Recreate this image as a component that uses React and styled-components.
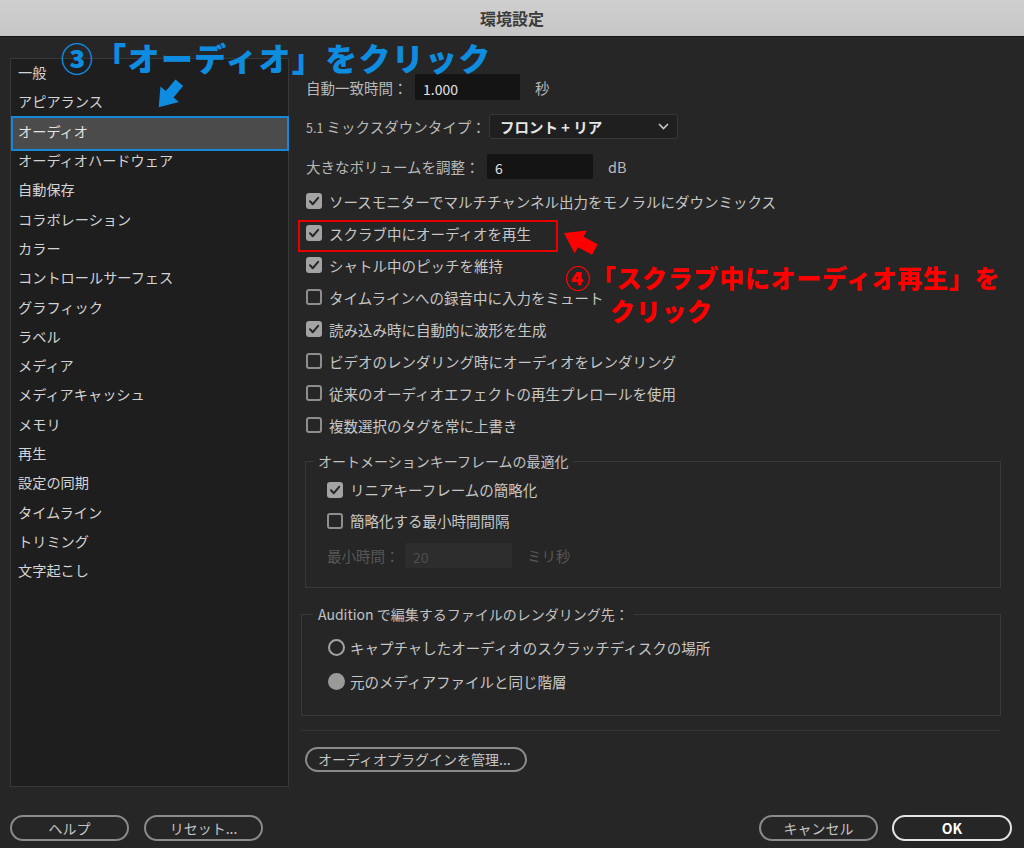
import React from "react";
import styled, { createGlobalStyle, css } from "styled-components";

const Global = createGlobalStyle`
  html, body { margin: 0; padding: 0; background: #262626; }
  body { font-family: "Noto Sans CJK JP", "Noto Sans", sans-serif; }
  * { box-sizing: border-box; }
`;

const Window = styled.div`
  position: relative;
  width: 1024px;
  height: 848px;
  display: flex;
  flex-direction: column;
  background: #262626;
  overflow: hidden;
  font-family: "Noto Sans CJK JP", "Noto Sans", sans-serif;
`;

const TitleBar = styled.div`
  flex: none;
  height: 37px;
  display: flex;
  align-items: center;
  justify-content: center;
  background: linear-gradient(#cfcfcf, #c6c6c6);
  border-bottom: 1px solid #141414;
  font-size: 16px;
  font-weight: 700;
  color: #3b3b3b;
`;

const Body = styled.div`
  flex: 1;
  display: flex;
  flex-direction: column;
  padding: 21px 12px 7px 10px;
`;

const Main = styled.div`
  display: flex;
  gap: 16px;
  height: 729px;
`;

const Sidebar = styled.ul`
  flex: none;
  width: 279px;
  margin: 0;
  padding: 1px 0 0;
  list-style: none;
  background: #1e1e1e;
  border: 1px solid #383838;
`;

const NavItem = styled.li`
  height: 29.3px;
  display: flex;
  align-items: center;
  padding: 0 0 5px 7px;
  font-size: 14.2px;
  color: #d4d4d4;
  white-space: nowrap;
  ${(p) =>
    p.$active &&
    css`
      height: 35.3px;
      margin: -3px -1px -3px 0;
      padding: 0 0 4px 5px;
      background: #4b4b4b;
      border: 2px solid #1787d9;
      color: #e4e4e4;
    `}
`;

const Content = styled.div`
  flex: 1;
  min-width: 0;
  display: flex;
  flex-direction: column;
  align-items: stretch;
  padding: 16px 11px 0 0;
`;

const FieldRow = styled.div`
  display: flex;
  align-items: center;
  height: ${(p) => p.$h || 25}px;
  margin-top: ${(p) => p.$mt || 0}px;
  font-size: 14.5px;
  color: ${(p) => (p.$disabled ? "#575757" : "#b9b9b9")};
  white-space: nowrap;
`;

const Label = styled.span`
  flex: none;
  width: ${(p) => p.$w}px;
  padding-left: 1px;
`;

const Small = styled.span`
  font-size: 12.5px;
`;

const TextInput = styled.div`
  flex: none;
  width: ${(p) => p.$w}px;
  height: 100%;
  display: flex;
  align-items: center;
  padding: 3px 0 0 8px;
  background: ${(p) => (p.$disabled ? "#2d2d2d" : "#141414")};
  border-radius: 2px;
  font-size: 14px;
  color: ${(p) => (p.$disabled ? "#4e4e4e" : "#e2e2e2")};
`;

const Unit = styled.span`
  margin-left: 15px;
`;

const Select = styled.div`
  flex: none;
  width: 189px;
  height: 100%;
  display: flex;
  align-items: center;
  justify-content: space-between;
  padding: 0 8px 0 10px;
  background: #1f1f1f;
  border: 1px solid #383838;
  border-radius: 3px;
  font-size: 14.5px;
  font-weight: 700;
  color: #e6e6e6;
`;

const CheckList = styled.div`
  display: flex;
  flex-direction: column;
  margin-top: 6px;
`;

const CheckRow = styled.div`
  display: flex;
  align-items: center;
  gap: 7px;
  height: ${(p) => p.$h || 32}px;
  padding-left: 1px;
  font-size: 14.5px;
  color: #c6c6c6;
  white-space: nowrap;
`;

const Box = styled.span`
  flex: none;
  width: 16px;
  height: 16px;
  border-radius: 3px;
  display: flex;
  align-items: center;
  justify-content: center;
  ${(p) =>
    p.$checked
      ? css`
          background: #a3a3a3;
        `
      : css`
          border: 2px solid #8e8e8e;
        `}
`;

const Radio = styled.span`
  flex: none;
  width: 17px;
  height: 17px;
  border-radius: 50%;
  ${(p) =>
    p.$filled
      ? css`
          background: #9a9a9a;
        `
      : css`
          border: 2.5px solid #a2a2a2;
        `}
`;

const RadioRow = styled.div`
  display: flex;
  align-items: center;
  gap: 5px;
  height: 34px;
  padding-left: 26px;
  font-size: 14.5px;
  color: #c6c6c6;
  white-space: nowrap;
`;

const Group = styled.fieldset`
  margin: ${(p) => p.$mt}px 0 0 ${(p) => p.$ml || 0}px;
  padding: 0;
  min-width: 0;
  border: 1px solid #383838;
`;

const Legend = styled.legend`
  margin-left: ${(p) => p.$ml || 7}px;
  padding: 0 5px;
  font-size: 14px;
  line-height: 20px;
  color: #c2c2c2;
  white-space: nowrap;
`;

const GroupBody = styled.div`
  display: flex;
  flex-direction: column;
  padding: ${(p) => p.$pad};
`;

const Divider = styled.div`
  height: 1px;
  margin: 14px 0 0 ${(p) => p.$ml || 0}px;
  background: #343434;
`;

const Pill = styled.button`
  flex: none;
  width: ${(p) => p.$w}px;
  height: ${(p) => p.$h || 26}px;
  padding: ${(p) => (p.$left ? "0 0 0 11px" : "0")};
  text-align: ${(p) => (p.$left ? "left" : "center")};
  background: transparent;
  border: 2px solid ${(p) => (p.$primary ? "#e4e4e4" : "#8a8a8a")};
  border-radius: 13px;
  font-family: inherit;
  font-size: 14px;
  font-weight: ${(p) => (p.$primary ? 700 : 400)};
  color: ${(p) => (p.$primary ? "#ffffff" : "#c4c4c4")};
  white-space: nowrap;
`;

const ManageRow = styled.div`
  margin-top: 15px;
`;

const Footer = styled.div`
  display: flex;
  justify-content: space-between;
  margin-top: 28px;
`;

const BtnGroup = styled.div`
  display: flex;
  gap: ${(p) => p.$gap}px;
`;

/* annotations (overlays) */
const Callout = styled.div`
  position: absolute;
  left: ${(p) => p.$x}px;
  top: ${(p) => p.$y}px;
  font-family: "Noto Sans CJK JP", sans-serif;
  font-weight: 900;
  font-size: ${(p) => p.$size}px;
  line-height: ${(p) => p.$lh}px;
  letter-spacing: ${(p) => p.$ls || 0}px;
  color: ${(p) => p.$color};
  white-space: nowrap;
`;

const CalloutLine = styled.div`
  padding-left: ${(p) => p.$indent || 0}px;
`;

const Highlight = styled.div`
  position: absolute;
  left: 298px;
  top: 220px;
  width: 260px;
  height: 32px;
  border: 2px solid #e80000;
`;

const ArrowSvg = styled.svg`
  position: absolute;
  left: ${(p) => p.$x}px;
  top: ${(p) => p.$y}px;
`;

const Arrow = ({ x, y, size, angle, color, points }) => (
  <ArrowSvg $x={x} $y={y} width={size} height={size} viewBox="-22 -22 44 44">
    <polygon points={points} fill={color} transform={`rotate(${angle})`} />
  </ArrowSvg>
);

const Check = () => (
  <svg width="12" height="12" viewBox="0 0 12 12">
    <path d="M2 6.3 L4.8 9.2 L10.2 2.8" fill="none" stroke="#262626" strokeWidth="2" strokeLinecap="round" strokeLinejoin="round" />
  </svg>
);

const CheckBox = ({ checked }) => <Box $checked={checked}>{checked && <Check />}</Box>;

const Chevron = () => (
  <svg width="11" height="7" viewBox="0 0 11 7">
    <path d="M1 1 L5.5 5.5 L10 1" fill="none" stroke="#c8c8c8" strokeWidth="1.6" />
  </svg>
);

const navItems = [
  "一般",
  "アピアランス",
  "オーディオ",
  "オーディオハードウェア",
  "自動保存",
  "コラボレーション",
  "カラー",
  "コントロールサーフェス",
  "グラフィック",
  "ラベル",
  "メディア",
  "メディアキャッシュ",
  "メモリ",
  "再生",
  "設定の同期",
  "タイムライン",
  "トリミング",
  "文字起こし",
];

const checks = [
  ["ソースモニターでマルチチャンネル出力をモノラルにダウンミックス", true],
  ["スクラブ中にオーディオを再生", true],
  ["シャトル中のピッチを維持", true],
  ["タイムラインへの録音中に入力をミュート", false],
  ["読み込み時に自動的に波形を生成", true],
  ["ビデオのレンダリング時にオーディオをレンダリング", false],
  ["従来のオーディオエフェクトの再生プレロールを使用", false],
  ["複数選択のタグを常に上書き", false],
];

export default function App() {
  return (
    <Window>
      <Global />
      <TitleBar>環境設定</TitleBar>
      <Body>
        <Main>
          <Sidebar>
            {navItems.map((n) => (
              <NavItem key={n} $active={n === "オーディオ"}>
                {n}
              </NavItem>
            ))}
          </Sidebar>
          <Content>
            <FieldRow $h={26}>
              <Label $w={110}>自動一致時間：</Label>
              <TextInput $w={105}>1.000</TextInput>
              <Unit>秒</Unit>
            </FieldRow>
            <FieldRow $mt={14}>
              <Label $w={184}>
                <Small>5.1</Small> ミックスダウンタイプ：
              </Label>
              <Select>
                <span>フロント + リア</span>
                <Chevron />
              </Select>
            </FieldRow>
            <FieldRow $mt={15}>
              <Label $w={182}>大きなボリュームを調整：</Label>
              <TextInput $w={106}>6</TextInput>
              <Unit>dB</Unit>
            </FieldRow>
            <CheckList>
              {checks.map(([t, c]) => (
                <CheckRow key={t}>
                  <CheckBox checked={c} />
                  {t}
                </CheckRow>
              ))}
            </CheckList>
            <Group $mt={10}>
              <Legend>オートメーションキーフレームの最適化</Legend>
              <GroupBody $pad="3px 0 19px 20px">
                <CheckRow $h={31}>
                  <CheckBox checked />
                  リニアキーフレームの簡略化
                </CheckRow>
                <CheckRow $h={31}>
                  <CheckBox />
                  簡略化する最小時間間隔
                </CheckRow>
                <FieldRow $mt={7} $disabled>
                  <Label $w={79}>最小時間：</Label>
                  <TextInput $w={107} $disabled>
                    20
                  </TextInput>
                  <Unit>ミリ秒</Unit>
                </FieldRow>
              </GroupBody>
            </Group>
            <Group $mt={16} $ml={-4}>
              <Legend $ml={11}>Audition で編集するファイルのレンダリング先：</Legend>
              <GroupBody $pad="6px 0 17px 0">
                <RadioRow>
                  <Radio />
                  キャプチャしたオーディオのスクラッチディスクの場所
                </RadioRow>
                <RadioRow>
                  <Radio $filled />
                  元のメディアファイルと同じ階層
                </RadioRow>
              </GroupBody>
            </Group>
            <Divider $ml={-4} />
            <ManageRow>
              <Pill $w={222} $h={25} $left>
                オーディオプラグインを管理...
              </Pill>
            </ManageRow>
          </Content>
        </Main>
        <Footer>
          <BtnGroup $gap={15}>
            <Pill $w={119}>ヘルプ</Pill>
            <Pill $w={119}>リセット...</Pill>
          </BtnGroup>
          <BtnGroup $gap={14}>
            <Pill $w={119}>キャンセル</Pill>
            <Pill $w={120} $primary>
              OK
            </Pill>
          </BtnGroup>
        </Footer>
      </Body>

      <Callout $x={61} $y={41} $size={32} $lh={32} $ls={1.3} $color="#0e8de0">
        ③「オーディオ」をクリック
      </Callout>
      <Arrow
        x={147}
        y={73}
        size={44}
        angle={130}
        color="#0e8de0"
        points="-16,-5 -1,-5 -1,-12 16,0 -1,12 -1,5 -16,5"
      />

      <Highlight />
      <Arrow
        x={557}
        y={219}
        size={44}
        angle={208}
        color="#ff0000"
        points="-18,-6 -2,-6 -2,-13 17,0 -2,13 -2,6 -18,6"
      />
      <Callout $x={565} $y={261} $size={25} $lh={33} $ls={0.7} $color="#ff0000">
        <CalloutLine>④「スクラブ中にオーディオ再生」を</CalloutLine>
        <CalloutLine $indent={45}>クリック</CalloutLine>
      </Callout>
    </Window>
  );
}
